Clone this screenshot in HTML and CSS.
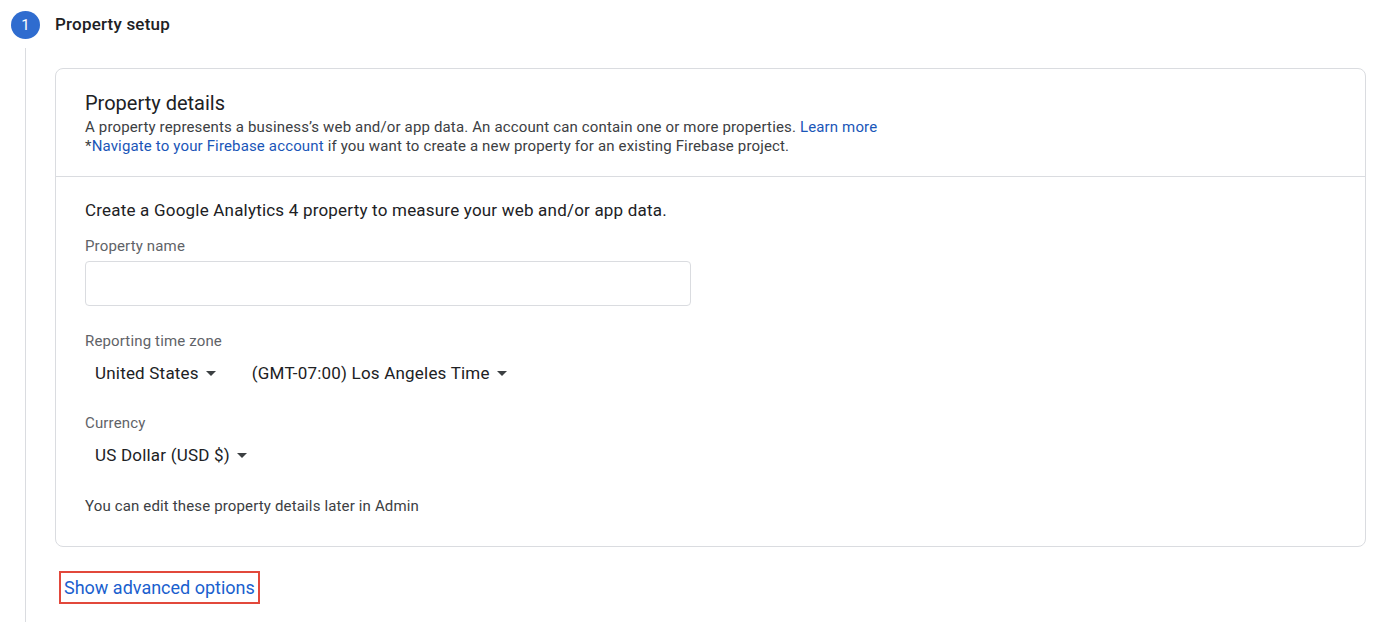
FILE: index.html
```html
<!DOCTYPE html>
<html>
<head>
<meta charset="utf-8">
<link rel="stylesheet" href="styles.css">
</head>
<body>
<div class="step">
  <div class="rail">
    <div class="badge">1</div>
    <div class="line"></div>
  </div>
  <div class="content">
    <div class="step-title">Property setup</div>
    <div class="card">
      <div class="card-head">
        <div class="card-title">Property details</div>
        <div class="desc">A property represents a business’s web and/or app data. An account can contain one or more properties. <a class="link">Learn more</a></div>
        <div class="desc">*<a class="link">Navigate to your Firebase account</a> if you want to create a new property for an existing Firebase project.</div>
      </div>
      <div class="card-body">
        <div class="intro">Create a Google Analytics 4 property to measure your web and/or app data.</div>
        <div class="label first">Property name</div>
        <div class="input"></div>
        <div class="label">Reporting time zone</div>
        <div class="selects">
          <div class="select">United States<span class="caret"></span></div>
          <div class="select">(GMT-07:00) Los Angeles Time<span class="caret"></span></div>
        </div>
        <div class="label lower">Currency</div>
        <div class="selects">
          <div class="select">US Dollar (USD $)<span class="caret"></span></div>
        </div>
        <div class="note">You can edit these property details later in Admin</div>
      </div>
    </div>
    <div class="advanced"><a class="adv-link">Show advanced options</a></div>
  </div>
</div>
</body>
</html>
```
FILE: styles.css
```css
html, body {
  margin: 0;
  padding: 0;
  background: #fff;
  font-family: Roboto, "Liberation Sans", Arial, sans-serif;
  color: #202124;
}
.step {
  display: flex;
  height: 622px;
  overflow: hidden;
}
.rail {
  width: 55px;
  flex: none;
  display: flex;
  flex-direction: column;
  align-items: center;
  padding-top: 11px;
  padding-right: 4px;
  box-sizing: border-box;
}
.badge {
  width: 29px;
  height: 28px;
  border-radius: 50%;
  background: #2f6ccf;
  color: #fff;
  font-size: 15px;
  display: flex;
  align-items: center;
  justify-content: center;
  flex: none;
}
.line {
  margin-top: 9px;
  width: 1px;
  flex: 1;
  background: #dadce0;
}
.content {
  flex: 1;
  padding-right: 34px;
}
.step-title {
  font-size: 17px;
  font-weight: 500;
  letter-spacing: 0.2px;
  color: #202124;
  line-height: 20px;
  padding-top: 14px;
  height: 68px;
  box-sizing: border-box;
}
.card {
  border: 1px solid #dadce0;
  border-radius: 8px;
  height: 479px;
  box-sizing: border-box;
}
.card-head {
  padding: 21px 29px 20px;
  border-bottom: 1px solid #dadce0;
}
.card-title {
  font-size: 20px;
  line-height: 26px;
  color: #202124;
  margin-bottom: 2px;
}
.desc {
  font-size: 15px;
  line-height: 19px;
  letter-spacing: 0.15px;
  color: #3c4043;
  white-space: nowrap;
}
.link {
  color: #1a56b8;
  text-decoration: none;
}
.card-body {
  padding: 22px 29px 0;
}
.intro {
  font-size: 17px;
  line-height: 22px;
  letter-spacing: 0.2px;
  color: #202124;
}
.label {
  font-size: 15px;
  line-height: 18px;
  letter-spacing: 0.15px;
  color: #5f6368;
  margin-top: 26px;
}
.label.first {
  margin-top: 16px;
}
.label.lower {
  margin-top: 30px;
}
.input {
  margin-top: 6px;
  width: 606px;
  height: 45px;
  box-sizing: border-box;
  border: 1px solid #dadce0;
  border-radius: 4px;
}
.selects {
  display: flex;
  gap: 36px;
  margin-top: 12px;
  padding-left: 10px;
}
.select {
  font-size: 17px;
  line-height: 22px;
  letter-spacing: 0.2px;
  color: #202124;
  display: flex;
  align-items: center;
}
.caret {
  margin-left: 7px;
  width: 0;
  height: 0;
  border-left: 5px solid transparent;
  border-right: 5px solid transparent;
  border-top: 5px solid #3c4043;
}
.note {
  margin-top: 31px;
  font-size: 15px;
  line-height: 18px;
  letter-spacing: 0.15px;
  color: #3c4043;
}
.advanced {
  padding-top: 24px;
  padding-left: 4px;
}
.adv-link {
  display: inline-block;
  font-size: 18px;
  line-height: 22px;
  color: #1a5fce;
  border: 2px solid #e2483b;
  padding: 4px 3px 3px 3px;
}
```
